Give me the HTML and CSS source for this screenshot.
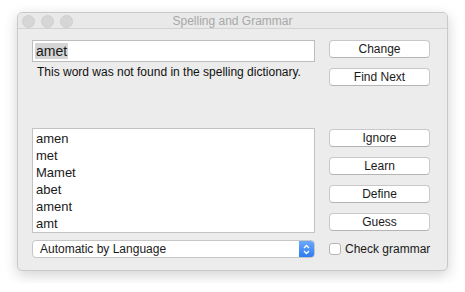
FILE: index.html
```html
<!DOCTYPE html>
<html lang="en">
<head>
    <meta charset="UTF-8">
    <meta name="viewport" content="width=device-width, initial-scale=1.0">
    <title>Spelling and Grammar</title>
    <link rel="stylesheet" href="styles.css">
</head>
<body>
    <div class="window">
        <div class="titlebar">
            <div class="lights">
                <span class="light"></span>
                <span class="light"></span>
                <span class="light"></span>
            </div>
            <div class="title">Spelling and Grammar</div>
        </div>
        <div class="content">
            <div class="left">
                <div class="word-field"><span class="selected">amet</span></div>
                <div class="message">This word was not found in the spelling dictionary.</div>
                <ul class="guesses">
                    <li>amen</li>
                    <li>met</li>
                    <li>Mamet</li>
                    <li>abet</li>
                    <li>ament</li>
                    <li>amt</li>
                </ul>
                <div class="popup">
                    <span class="popup-label">Automatic by Language</span>
                    <span class="popup-arrows">
                        <svg width="7" height="11" viewBox="0 0 7 11">
                            <path d="M1 4 L3.5 1.5 L6 4 M1 7 L3.5 9.5 L6 7" fill="none" stroke="#fff" stroke-width="1.3"/>
                        </svg>
                    </span>
                </div>
            </div>
            <div class="right">
                <button class="btn">Change</button>
                <button class="btn">Find Next</button>
                <button class="btn btn-gap">Ignore</button>
                <button class="btn">Learn</button>
                <button class="btn">Define</button>
                <button class="btn">Guess</button>
                <label class="check">
                    <span class="box"></span>
                    Check grammar
                </label>
            </div>
        </div>
    </div>
</body>
</html>
```

FILE: styles.css
```css
body {
    margin: 0;
    padding: 12px 17px;
    background-color: #fff;
    font-family: "Liberation Sans", Arial, sans-serif;
    color: #1a1a1a;
}

.window {
    width: 431px;
    height: 259px;
    box-sizing: border-box;
    background-color: #ececec;
    border: 1px solid #c9c9c9;
    border-radius: 5px;
    box-shadow: 0 4px 14px rgba(0, 0, 0, 0.18);
    overflow: hidden;
}

.titlebar {
    position: relative;
    height: 15px;
    border-bottom: 1px solid #d3d3d3;
    background-color: #e9e9e9;
}

.lights {
    display: flex;
    gap: 6px;
    padding: 2px 0 0 4px;
}

.light {
    width: 11px;
    height: 11px;
    border-radius: 50%;
    background-color: #d6d6d6;
    border: 1px solid #cecece;
}

.title {
    position: absolute;
    top: 1px;
    left: 0;
    right: 0;
    text-align: center;
    font-size: 12px;
    line-height: 14px;
    color: #a8a8a8;
}

.content {
    display: flex;
    gap: 14px;
    padding: 11px 0 0 14px;
}

.left {
    width: 283px;
    display: flex;
    flex-direction: column;
}

.word-field {
    height: 22px;
    box-sizing: border-box;
    background-color: #fff;
    border: 1px solid #bdbdbd;
    padding: 2px 0 0 2px;
    font-size: 14px;
    line-height: 16px;
}

.selected {
    display: inline-block;
    background-color: #d5d5d5;
    padding: 0 1px;
}

.message {
    margin-top: 3px;
    padding-left: 5px;
    font-size: 12px;
    line-height: 15px;
    color: #111;
}

.guesses {
    list-style: none;
    margin: 48px 0 0;
    padding: 1px 0 0 3px;
    height: 105px;
    box-sizing: border-box;
    background-color: #fff;
    border: 1px solid #c3c3c3;
    font-size: 13px;
    line-height: 17px;
}

.popup {
    display: flex;
    margin-top: 7px;
    height: 18px;
    box-sizing: border-box;
    background-color: #fff;
    border: 1px solid #c6c6c6;
    border-radius: 4px;
    overflow: hidden;
    font-size: 12px;
}

.popup-label {
    flex: 1;
    padding-left: 7px;
    line-height: 16px;
}

.popup-arrows {
    width: 15px;
    display: flex;
    align-items: center;
    justify-content: center;
    background: linear-gradient(#6ca8fb, #2e7cf1);
}

.right {
    width: 101px;
    display: flex;
    flex-direction: column;
}

.btn {
    height: 18px;
    margin-bottom: 10px;
    padding: 0;
    font-family: inherit;
    font-size: 12px;
    color: #1a1a1a;
    background-color: #fff;
    border: 1px solid #c8c8c8;
    border-bottom-color: #b4b4b4;
    border-radius: 4px;
}

.btn-gap {
    margin-top: 33px;
}

.check {
    display: flex;
    align-items: center;
    gap: 4px;
    margin-top: 1px;
    font-size: 12px;
    line-height: 14px;
    white-space: nowrap;
}

.box {
    flex: none;
    width: 12px;
    height: 12px;
    box-sizing: border-box;
    background-color: #fff;
    border: 1px solid #b5b5b5;
    border-radius: 3px;
}
```
